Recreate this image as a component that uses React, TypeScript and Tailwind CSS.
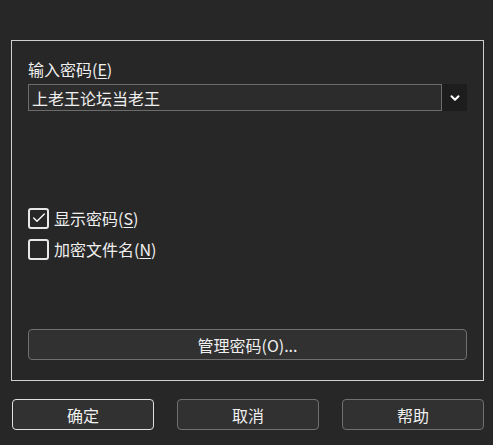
import { Check, ChevronDown } from "lucide-react";

const font = { fontFamily: '"Noto Sans CJK SC", "Noto Sans", sans-serif' };

const CheckRow = ({ checked, label, hot }: { checked: boolean; label: string; hot: string }) => (
  <div className="flex items-center h-[22px] gap-[5px]">
    <div className="w-[21px] h-[21px] rounded-[3px] border-2 border-[#e8e8e8] flex items-center justify-center">
      {checked && <Check size={16} strokeWidth={2} className="text-white" />}
    </div>
    <span className="text-[16px] leading-[22px] text-[#f0f0f0]">
      {label}(<span className="underline underline-offset-2">{hot}</span>)
    </span>
  </div>
);

const App = () => {
  return (
    <div className="w-[493px] h-[445px] bg-[#272727] overflow-hidden" style={font}>
      <div className="ml-[11px] mt-[40px] w-[473px] h-[341px] border border-[#cfcfcf] flex flex-col pl-[16px] pr-[16px]">
        <div className="mt-[17px] text-[16px] leading-[22px] text-[#f0f0f0]">
          输入密码(<span className="underline underline-offset-2">E</span>)
        </div>
        <div className="mt-[4px] flex h-[27px]">
          <div className="flex-1 border border-[#6c6c6c] bg-[#2c2c2c] flex items-center pl-[3px] text-[16px] text-[#f0f0f0]">
            上老王论坛当老王
          </div>
          <div className="w-[25px] bg-[#1d1d1d] flex items-center justify-center">
            <ChevronDown size={14} strokeWidth={3.5} className="text-white" />
          </div>
        </div>
        <div className="mt-[96px] flex flex-col gap-[9px]">
          <CheckRow checked label="显示密码" hot="S" />
          <CheckRow checked={false} label="加密文件名" hot="N" />
        </div>
        <div className="mt-[69px] h-[31px] rounded-[4px] border border-[#707070] bg-[#313131] flex items-center justify-center text-[16px] text-[#f0f0f0]">
          管理密码(O)...
        </div>
      </div>
      <div className="flex gap-[23px] ml-[12px] mt-[18px]">
        <div className="w-[142px] h-[31px] rounded-[4px] border border-[#e0e0e0] bg-[#313131] flex items-center justify-center text-[16px] text-[#f0f0f0]">
          确定
        </div>
        <div className="w-[142px] h-[31px] rounded-[4px] border border-[#707070] bg-[#313131] flex items-center justify-center text-[16px] text-[#f0f0f0]">
          取消
        </div>
        <div className="w-[142px] h-[31px] rounded-[4px] border border-[#707070] bg-[#313131] flex items-center justify-center text-[16px] text-[#f0f0f0]">
          帮助
        </div>
      </div>
    </div>
  );
};

export default App;
